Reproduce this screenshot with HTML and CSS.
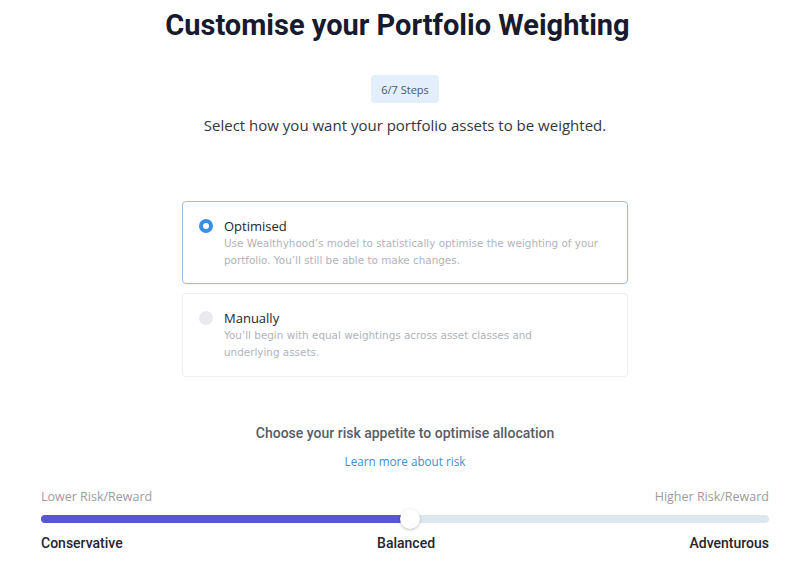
FILE: index.html
```html
<!DOCTYPE html>
<html>
<head>
<meta charset="utf-8">
<link rel="stylesheet" href="styles.css">
</head>
<body>
<main class="page">
  <h1 class="title">Customise your Portfolio Weighting</h1>
  <div class="badge">6/7 Steps</div>
  <p class="subtitle">Select how you want your portfolio assets to be weighted.</p>

  <div class="options">
    <div class="option selected">
      <span class="radio on"></span>
      <div class="option-body">
        <div class="option-title">Optimised</div>
        <div class="option-desc">Use Wealthyhood’s model to statistically optimise the weighting of your portfolio. You’ll still be able to make changes.</div>
      </div>
    </div>
    <div class="option">
      <span class="radio"></span>
      <div class="option-body">
        <div class="option-title">Manually</div>
        <div class="option-desc">You’ll begin with equal weightings across asset classes and<br>underlying assets.</div>
      </div>
    </div>
  </div>

  <h2 class="risk-title">Choose your risk appetite to optimise allocation</h2>
  <a class="risk-link">Learn more about risk</a>

  <section class="slider">
    <div class="slider-ends">
      <span>Lower Risk/Reward</span>
      <span>Higher Risk/Reward</span>
    </div>
    <div class="track">
      <div class="fill" style="width: 50.7%"></div>
      <span class="thumb" style="left: 50.7%"></span>
    </div>
    <div class="slider-labels">
      <span>Conservative</span>
      <span>Balanced</span>
      <span>Adventurous</span>
    </div>
  </section>
</main>
</body>
</html>
```

FILE: styles.css
```css
* { box-sizing: border-box; }
html, body { margin: 0; padding: 0; background: #fff; }
body { width: 800px; height: 586px; overflow: hidden; }

.page {
  display: flex;
  flex-direction: column;
  align-items: center;
  padding: 0 31px 0 41px;
  font-family: "Open Sans", "Noto Sans", sans-serif;
}

.title {
  margin: 9px 15px 0 0;
  font-family: Roboto, "Noto Sans", sans-serif;
  font-weight: 700;
  font-size: 29px;
  line-height: 32px;
  color: #181a2e;
}

.badge {
  margin-top: 34px;
  height: 28px;
  padding: 0 10px;
  display: flex;
  align-items: center;
  background: #e3effc;
  border-radius: 4px;
  font-size: 11px;
  color: #4b5563;
}

.subtitle {
  margin: 12px 0 0;
  font-size: 15px;
  line-height: 20px;
  color: #333641;
}

.options {
  margin-top: 66px;
  width: 446px;
  display: flex;
  flex-direction: column;
  gap: 9px;
}

.option {
  display: flex;
  gap: 11px;
  padding: 16px 16px 14px 16px;
  border: 1px solid #eeeff2;
  border-radius: 4px;
  height: 84px;
}
.option.selected { border-color: #9cbde0; height: 83px; }

.radio {
  flex: none;
  width: 14px;
  height: 14px;
  margin-top: 1px;
  border-radius: 50%;
  background: #e9eaed;
}
.radio.on {
  background: #fff;
  border: 4px solid #3a8ee6;
}

.option-body { max-width: 380px; }

.option-title {
  font-size: 13px;
  line-height: 17px;
  color: #23252e;
}
.option-desc {
  font-family: "DejaVu Sans", "Open Sans", sans-serif;
  font-size: 10.4px;
  line-height: 17px;
  color: #b0b3ba;
}

.risk-title {
  margin: 46px 0 0;
  font-family: Roboto, "Noto Sans", sans-serif;
  font-weight: 500;
  font-size: 14px;
  line-height: 20px;
  color: #585d68;
}

.risk-link {
  margin-top: 10px;
  font-size: 11.7px;
  line-height: 16px;
  color: #3f8fcc;
}

.slider {
  align-self: stretch;
  margin-top: 20px;
}
.slider-ends {
  display: flex;
  justify-content: space-between;
  font-size: 12.5px;
  line-height: 16px;
  color: #9a9ca3;
}
.track {
  position: relative;
  margin-top: 10px;
  height: 8px;
  border-radius: 4px;
  background: #dfe7ee;
}
.fill {
  height: 100%;
  border-radius: 4px;
  background: #5857d1;
}
.thumb {
  position: absolute;
  top: 50%;
  width: 20px;
  height: 20px;
  margin: -10px 0 0 -10px;
  border-radius: 50%;
  background: #fff;
  box-shadow: 0 1px 3px rgba(0,0,0,0.25);
}
.slider-labels {
  margin-top: 11px;
  display: flex;
  justify-content: space-between;
  font-family: Roboto, "Noto Sans", sans-serif;
  font-weight: 500;
  font-size: 14px;
  line-height: 18px;
  color: #24262e;
}
```
